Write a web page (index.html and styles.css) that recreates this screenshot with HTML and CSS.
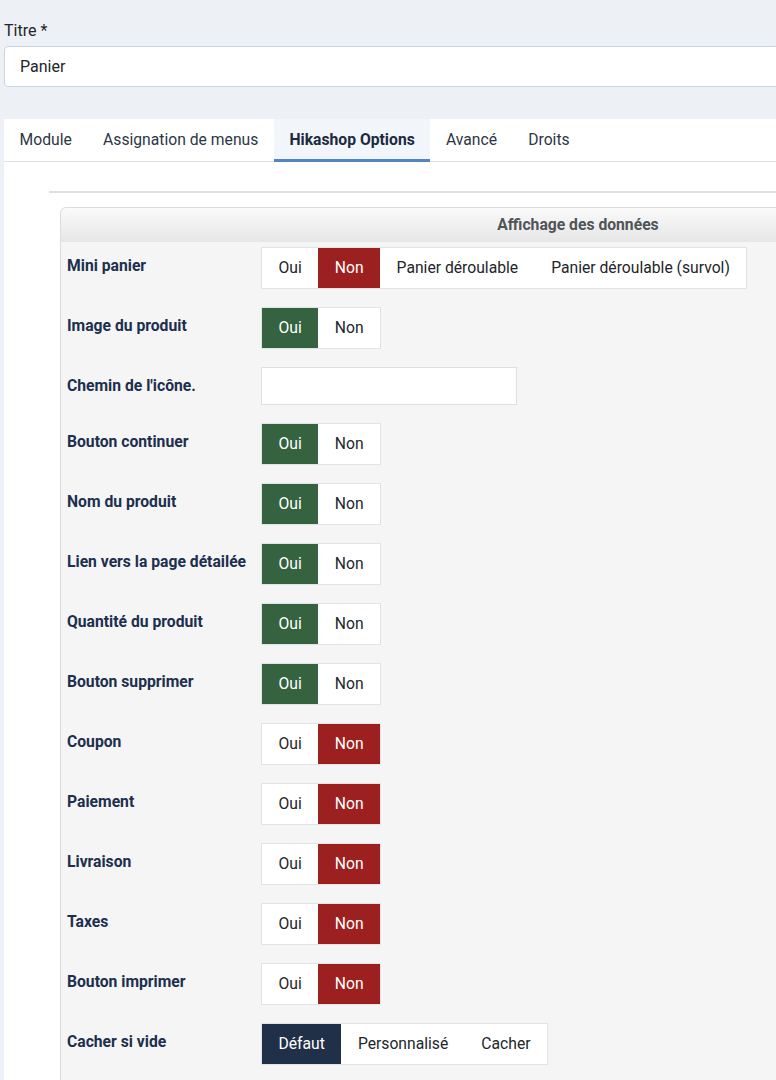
FILE: index.html
```html
<!DOCTYPE html>
<html>
<head>
<meta charset="utf-8">
<title>Module - Panier</title>
<link rel="stylesheet" href="styles.css">
</head>
<body>
<div class="page">
	<label class="field-label" for="titre">Titre *</label>
	<input class="field-input" id="titre" name="titre" value="Panier" />

	<div class="tabs-box">
		<ul class="tabs">
			<li class="tab">Module</li>
			<li class="tab">Assignation de menus</li>
			<li class="tab active">Hikashop Options</li>
			<li class="tab">Avancé</li>
			<li class="tab">Droits</li>
		</ul>
		<div class="tab-body">
			<hr class="sep" />
			<div class="panel">
				<div class="panel-head">Affichage des données</div>
				<div class="panel-body">
					<div class="opt-row">
						<div class="opt-label">Mini panier</div>
						<div class="btn-group">
							<span class="opt-btn">Oui</span>
							<span class="opt-btn no">Non</span>
							<span class="opt-btn">Panier déroulable</span>
							<span class="opt-btn">Panier déroulable (survol)</span>
						</div>
					</div>
					<div class="opt-row">
						<div class="opt-label">Image du produit</div>
						<div class="btn-group">
							<span class="opt-btn yes">Oui</span>
							<span class="opt-btn">Non</span>
						</div>
					</div>
					<div class="opt-row">
						<div class="opt-label">Chemin de l'icône.</div>
						<input class="opt-input" name="icon_path" />
					</div>
					<div class="opt-row">
						<div class="opt-label">Bouton continuer</div>
						<div class="btn-group">
							<span class="opt-btn yes">Oui</span>
							<span class="opt-btn">Non</span>
						</div>
					</div>
					<div class="opt-row">
						<div class="opt-label">Nom du produit</div>
						<div class="btn-group">
							<span class="opt-btn yes">Oui</span>
							<span class="opt-btn">Non</span>
						</div>
					</div>
					<div class="opt-row">
						<div class="opt-label">Lien vers la page détailée</div>
						<div class="btn-group">
							<span class="opt-btn yes">Oui</span>
							<span class="opt-btn">Non</span>
						</div>
					</div>
					<div class="opt-row">
						<div class="opt-label">Quantité du produit</div>
						<div class="btn-group">
							<span class="opt-btn yes">Oui</span>
							<span class="opt-btn">Non</span>
						</div>
					</div>
					<div class="opt-row">
						<div class="opt-label">Bouton supprimer</div>
						<div class="btn-group">
							<span class="opt-btn yes">Oui</span>
							<span class="opt-btn">Non</span>
						</div>
					</div>
					<div class="opt-row">
						<div class="opt-label">Coupon</div>
						<div class="btn-group">
							<span class="opt-btn">Oui</span>
							<span class="opt-btn no">Non</span>
						</div>
					</div>
					<div class="opt-row">
						<div class="opt-label">Paiement</div>
						<div class="btn-group">
							<span class="opt-btn">Oui</span>
							<span class="opt-btn no">Non</span>
						</div>
					</div>
					<div class="opt-row">
						<div class="opt-label">Livraison</div>
						<div class="btn-group">
							<span class="opt-btn">Oui</span>
							<span class="opt-btn no">Non</span>
						</div>
					</div>
					<div class="opt-row">
						<div class="opt-label">Taxes</div>
						<div class="btn-group">
							<span class="opt-btn">Oui</span>
							<span class="opt-btn no">Non</span>
						</div>
					</div>
					<div class="opt-row">
						<div class="opt-label">Bouton imprimer</div>
						<div class="btn-group">
							<span class="opt-btn">Oui</span>
							<span class="opt-btn no">Non</span>
						</div>
					</div>
					<div class="opt-row">
						<div class="opt-label">Cacher si vide</div>
						<div class="btn-group">
							<span class="opt-btn def">Défaut</span>
							<span class="opt-btn">Personnalisé</span>
							<span class="opt-btn">Cacher</span>
						</div>
					</div>
				</div>
			</div>
		</div>
	</div>
</div>
</body>
</html>
```

FILE: styles.css
```css
*{margin: 0;padding: 0;box-sizing: border-box;}
html{overflow: hidden;}
body{font: 15.7px Roboto,"Liberation Sans",sans-serif;color: #22262a;background-color: #edf1f6;}
.page{width: 1104px;padding: 21px 0 0 4px;}

.field-label{display: block;line-height: 20px;height: 20px;margin-bottom: 5px;font-size: 16px;}
.field-input{display: block;width: 100%;height: 41px;padding: 0 15px;border: 1px solid #c9d4e4;border-radius: 4px;background: #fff;font: 16px Roboto,"Liberation Sans",sans-serif;color: #22262a;}

.tabs-box{margin-top: 32px;background-color: #fff;min-height: 1000px;}
.tabs{list-style: none;display: flex;height: 43px;border-bottom: 1px solid #dfe3e8;}
.tab{height: 42px;line-height: 42px;padding: 0 15.6px;color: #2c3645;}
.tab.active{background-color: #f2f5f9;font-weight: bold;color: #1c2a40;border-bottom: 3px solid #5284c4;height: 43px;}

.tab-body{padding: 0 8px 0 45px;}
.sep{border: 0;border-top: 2px solid #dde1e6;margin-top: 29px;}
.panel{margin: 14px 0 0 11px;border: 1px solid #dcdcdc;border-radius: 6px 6px 0 0;background-color: #f5f5f5;}
.panel-head{height: 34px;line-height: 34px;text-align: center;font-weight: bold;color: #505458;background: linear-gradient(#fafafa,#e6e6e6);border-radius: 6px 6px 0 0;}
.panel-body{padding: 5px 0 20px 6px;}

.opt-row{display: flex;align-items: flex-start;margin-bottom: 18px;}
.opt-label{width: 194px;flex: none;margin-top: 9px;line-height: 20px;font-weight: bold;color: #1c2f4e;}
.btn-group{display: flex;border: 1px solid #e0e3e7;background-color: #fff;}
.opt-btn{height: 40px;line-height: 40px;padding: 0 16.5px;color: #22262a;}
.opt-btn.yes{background-color: #35623f;color: #fff;}
.opt-btn.no{background-color: #9d2020;color: #fff;}
.opt-btn.def{background-color: #1f3048;color: #fff;}
.opt-input{width: 256px;height: 38px;border: 1px solid #dde1e6;background-color: #fff;}
```
